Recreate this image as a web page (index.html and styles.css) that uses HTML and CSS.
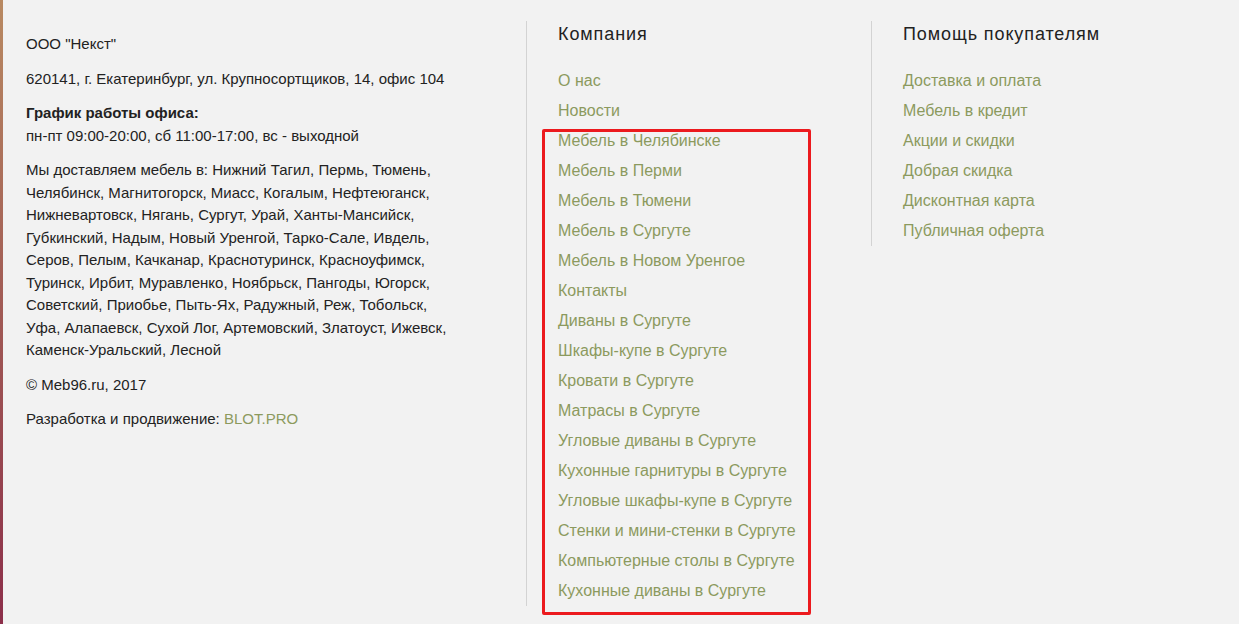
FILE: index.html
```html
<!DOCTYPE html>
<html lang="ru">
<head>
<meta charset="utf-8">
<title>Footer</title>
<link rel="stylesheet" href="styles.css">
</head>
<body>
<footer class="footer">
  <div class="col-info">
    <p class="info-p">ООО "Некст"</p>
    <p class="info-p">620141, г. Екатеринбург, ул. Крупносортщиков, 14, офис 104</p>
    <p class="info-p"><strong>График работы офиса:</strong><br>пн-пт 09:00-20:00, сб 11:00-17:00, вс - выходной</p>
    <p class="info-p">Мы доставляем мебель в: Нижний Тагил, Пермь, Тюмень, Челябинск, Магнитогорск, Миасс, Когалым, Нефтеюганск, Нижневартовск, Нягань, Сургут, Урай, Ханты-Мансийск, Губкинский, Надым, Новый Уренгой, Тарко-Сале, Ивдель, Серов, Пелым, Качканар, Краснотуринск, Красноуфимск, Туринск, Ирбит, Муравленко, Ноябрьск, Пангоды, Югорск, Советский, Приобье, Пыть-Ях, Радужный, Реж, Тобольск, Уфа, Алапаевск, Сухой Лог, Артемовский, Златоуст, Ижевск, Каменск-Уральский, Лесной</p>
    <p class="info-p">© Meb96.ru, 2017</p>
    <p class="info-p">Разработка и продвижение: <a class="link" href="#">BLOT.PRO</a></p>
  </div>
  <nav class="col-links col-company">
    <h3 class="col-title">Компания</h3>
    <ul class="link-list">
      <li><a class="link" href="#">О нас</a></li>
      <li><a class="link" href="#">Новости</a></li>
      <li><a class="link" href="#">Мебель в Челябинске</a></li>
      <li><a class="link" href="#">Мебель в Перми</a></li>
      <li><a class="link" href="#">Мебель в Тюмени</a></li>
      <li><a class="link" href="#">Мебель в Сургуте</a></li>
      <li><a class="link" href="#">Мебель в Новом Уренгое</a></li>
      <li><a class="link" href="#">Контакты</a></li>
      <li><a class="link" href="#">Диваны в Сургуте</a></li>
      <li><a class="link" href="#">Шкафы-купе в Сургуте</a></li>
      <li><a class="link" href="#">Кровати в Сургуте</a></li>
      <li><a class="link" href="#">Матрасы в Сургуте</a></li>
      <li><a class="link" href="#">Угловые диваны в Сургуте</a></li>
      <li><a class="link" href="#">Кухонные гарнитуры в Сургуте</a></li>
      <li><a class="link" href="#">Угловые шкафы-купе в Сургуте</a></li>
      <li><a class="link" href="#">Стенки и мини-стенки в Сургуте</a></li>
      <li><a class="link" href="#">Компьютерные столы в Сургуте</a></li>
      <li><a class="link" href="#">Кухонные диваны в Сургуте</a></li>
    </ul>
    <div class="highlight"></div>
  </nav>
  <nav class="col-links">
    <h3 class="col-title">Помощь покупателям</h3>
    <ul class="link-list">
      <li><a class="link" href="#">Доставка и оплата</a></li>
      <li><a class="link" href="#">Мебель в кредит</a></li>
      <li><a class="link" href="#">Акции и скидки</a></li>
      <li><a class="link" href="#">Добрая скидка</a></li>
      <li><a class="link" href="#">Дисконтная карта</a></li>
      <li><a class="link" href="#">Публичная оферта</a></li>
    </ul>
  </nav>
</footer>
</body>
</html>
```

FILE: styles.css
```css
html, body {
  margin: 0;
  padding: 0;
}
body {
  background: #f2f2f2;
  font-family: "Liberation Sans", Arial, sans-serif;
  color: #222;
  height: 624px;
  overflow: hidden;
  border-left: 3px solid transparent;
  border-image: linear-gradient(to bottom, #b98a62 0%, #a15a55 50%, #8c2f4a 100%) 1;
  box-sizing: border-box;
}
.footer {
  display: flex;
  align-items: flex-start;
  padding: 21px 0 0 23px;
}
.col-info {
  width: 500px;
  flex: none;
  padding-top: 12px;
  font-size: 15px;
  line-height: 22.5px;
}
.info-p {
  margin: 0 0 12px;
  max-width: 426px;
}
.info-p strong {
  font-weight: bold;
}
.col-links {
  border-left: 1px solid #d3d3d3;
  padding-left: 31px;
  flex: none;
}
.col-company {
  width: 313px;
  position: relative;
}
.col-title {
  margin: 0 0 19px;
  font-size: 18px;
  font-weight: normal;
  line-height: 26px;
  letter-spacing: 0.9px;
  color: #222;
}
.link-list {
  list-style: none;
  margin: 0;
  padding: 0;
  font-size: 16px;
  line-height: 30px;
}
.link {
  color: #8c9a5e;
  text-decoration: none;
}
.highlight {
  position: absolute;
  left: 15px;
  top: 108px;
  width: 269px;
  height: 486px;
  box-sizing: border-box;
  border: 3px solid #ec1a1e;
  border-radius: 2px;
  pointer-events: none;
}
```
